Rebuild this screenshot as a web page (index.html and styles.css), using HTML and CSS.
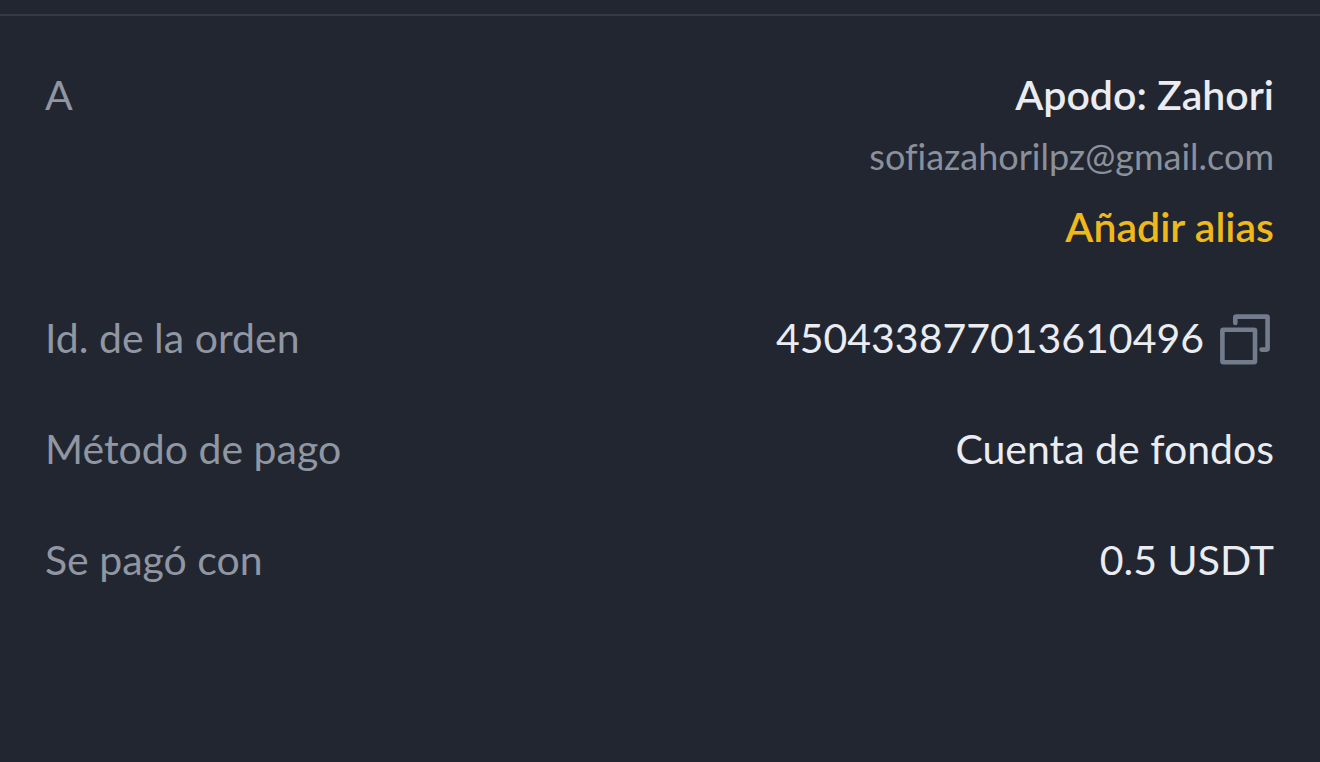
FILE: index.html
```html
<!DOCTYPE html>
<html lang="es">
  <head>
    <meta charset="UTF-8">
    <title>Detalles de la orden</title>
    <link rel="stylesheet" href="styles.css">
  </head>
  <body>
    <dl class="details">
      <div class="row">
        <dt>A</dt>
        <dd class="recipient">
          <span class="nickname">Apodo: Zahori</span>
          <span class="email">sofiazahorilpz@gmail.com</span>
          <a class="alias-link" href="#">Añadir alias</a>
        </dd>
      </div>
      <div class="row">
        <dt>Id. de la orden</dt>
        <dd class="order-id">
          <span>450433877013610496</span>
          <button class="copy-button" type="button" aria-label="Copiar">
            <svg width="54" height="54" viewBox="0 0 54 54" fill="none" stroke="currentColor" stroke-width="4.6" stroke-linecap="round" stroke-linejoin="round">
              <path d="M15.3 12V6.6Q15.3 5.6 16.3 5.6H46.6Q47.6 5.6 47.6 6.6V37.6Q47.6 38.6 46.6 38.6H41.6" />
              <rect x="2.4" y="18.8" width="32.6" height="32.4" rx="1" />
            </svg>
          </button>
        </dd>
      </div>
      <div class="row">
        <dt>Método de pago</dt>
        <dd>Cuenta de fondos</dd>
      </div>
      <div class="row">
        <dt>Se pagó con</dt>
        <dd>0.5 USDT</dd>
      </div>
    </dl>
  </body>
</html>
```

FILE: styles.css
```css
body {
  margin: 0;
  padding-top: 14px;
  background-color: #222630;
  font-family: Lato, "Open Sans", sans-serif;
  font-size: 41px;
  line-height: 56px;
  font-variant-ligatures: none;
  color: #eaecf2;
}

.details {
  display: flex;
  flex-direction: column;
  gap: 55px;
  margin: 0;
  padding: 51px 46px 51px 45px;
  border-top: 2px solid #363a45;
}

.row {
  display: flex;
  justify-content: space-between;
}

dt {
  color: #9096a2;
}

dd {
  margin: 0;
}

.recipient {
  display: flex;
  flex-direction: column;
  align-items: flex-end;
  gap: 10px;
}

.nickname,
.alias-link {
  font-weight: 600;
}

.email {
  margin-bottom: 10px;
  font-size: 36px;
  line-height: 46px;
  color: #8a909c;
}

.alias-link {
  color: #f0b91b;
  text-decoration: none;
}

.order-id {
  display: flex;
  align-items: center;
  gap: 16px;
}

.copy-button {
  display: flex;
  padding: 0;
  border: none;
  background: none;
  color: #737c8c;
  cursor: pointer;
}
```
